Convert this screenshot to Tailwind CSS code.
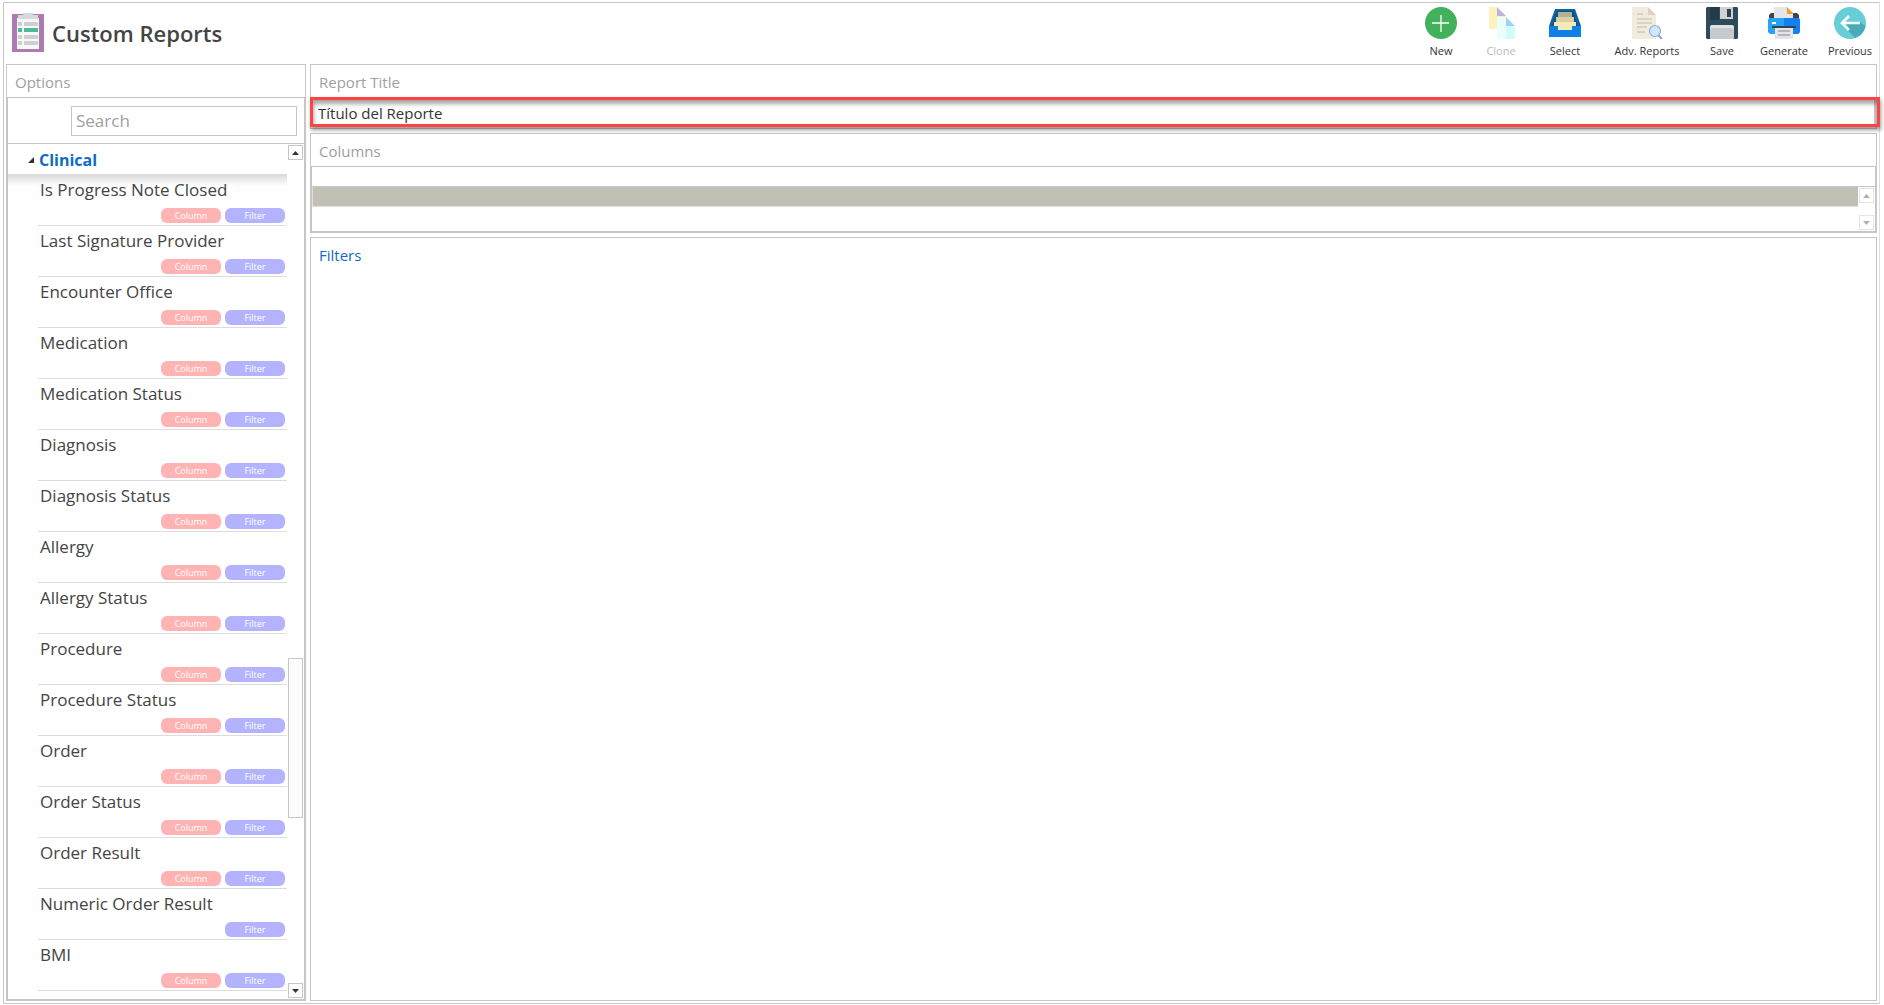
<!DOCTYPE html>
<html lang="en">
<head>
<meta charset="utf-8">
<title>Custom Reports</title>
<script src="https://cdn.jsdelivr.net/npm/@tailwindcss/browser@4"></script>
</head>
<body class="h-screen overflow-hidden bg-white pl-[3px] pr-1 pt-[2px] pb-px font-['Open_Sans','Noto_Sans',sans-serif] text-[#444]">
<div class="flex h-full flex-col border border-[#c6c6c6] border-r-[#e0e0e0] pl-[2px] pr-[2px] pb-[2px]">
  <header class="flex h-[61px] shrink-0 items-start justify-between">
    <div class="flex items-center gap-[7px] pl-[5px] pt-[10px]">
      <svg class="h-10 w-[34px]" viewBox="0 0 34 40">
        <rect x="1" y="1" width="32" height="38" fill="#ad7bb0"/>
        <rect x="6" y="5" width="22" height="31" fill="#f8f8f8"/>
        <path d="M7 2h5V0h10v2h5v4H7z" fill="#d5dadc"/>
        <path d="M7 9h4v4H7zM13 9h14v4H13zM7 22h4v4H7zM13 22h14v4H13zM7 28h4v4H7zM13 28h14v4H13z" fill="#cdd0d3"/>
        <path d="M7 15h4v4H7zM13 15h14v4H13z" fill="#4dbaa0"/>
      </svg>
      <h1 class="text-[22px] leading-[30px] font-semibold">Custom Reports</h1>
    </div>
    <nav class="flex pt-1 text-[11px] leading-4 text-[#333]" aria-label="Report actions">
      <button class="flex w-[52px] flex-col items-center gap-1">
        <svg class="size-8" viewBox="0 0 32 32"><circle cx="16" cy="16" r="16" fill="#43b05c"/><path d="M16 8v17M7 16h17" stroke="#fff" stroke-width="1.3"/></svg>
        New
      </button>
      <button class="flex w-[68px] flex-col items-center gap-1 text-[#bbb]" disabled>
        <svg class="size-8" viewBox="0 0 32 32"><path d="M4 0h8v9h9v13H4z" fill="#fff0c0"/><path d="M12 0l9 9h-9z" fill="#bdb4d8"/><path d="M12 10h9v9h9v13H12z" fill="#e9ffff"/><path d="M21 19h9v13h-9z" fill="#d2fcfb"/><path d="M21 10l9 9h-9z" fill="#a4d0f6"/></svg>
        Clone
      </button>
      <button class="flex w-[60px] flex-col items-center gap-1">
        <svg class="size-8" viewBox="0 0 32 32"><path d="M6 2h20l6 17v11H0V19z" fill="#12629c"/><path d="M8 4h16l5 16H3z" fill="#0d4f83"/><path d="M9 5h14v6H9z" fill="#b4b196"/><path d="M7 10h18v5H7z" fill="#d9cfa5"/><path d="M5 15h22v9H5z" fill="#f5e9b8"/><path d="M0 19h9v4h14v-4h9v11H0z" fill="#0f80e5"/></svg>
        Select
      </button>
      <button class="flex w-[104px] flex-col items-center gap-1">
        <svg class="size-8" viewBox="0 0 32 32"><path d="M1 0h16l8 8v24H1z" fill="#f0ebdc"/><path d="M17 0l8 8h-8z" fill="#dcd4bd"/><path d="M6 7h6M6 12h15M6 16h15M6 20h10M6 25h8" stroke="#d4ccb5" stroke-width="1.3"/><path d="M27 28l4 4" stroke="#8f9bd8" stroke-width="2"/><circle cx="24" cy="24" r="5.500" fill="#cde7fb" stroke="#98a4dc" stroke-width="1.2"/></svg>
        Adv. Reports
      </button>
      <button class="flex w-[46px] flex-col items-center gap-1">
        <svg class="size-8" viewBox="0 0 32 32"><path d="M1 0h30l1 1v30l-1 1H1l-1-1V1z" fill="#2f4a5a"/><path d="M4 0h9v13H4z" fill="#233a48"/><path d="M14 0h13v12H14z" fill="#cfd2d5"/><path d="M21 2h4v8h-4z" fill="#2b4352"/><path d="M4 20q0-2 2-2h20q2 0 2 2v12H4z" fill="#e0e2e4"/><path d="M4 24q0-3 3-3h18q3 0 3 3v8H4z" fill="#c7cacd"/></svg>
        Save
      </button>
      <button class="flex w-[78px] flex-col items-center gap-1">
        <svg class="size-8" viewBox="0 0 32 32"><path d="M1 12V8l2-2h26l2 2v4z" fill="#43434b"/><path d="M6 0h13l6 7v6H6z" fill="#e6e6ea"/><path d="M19 0l7 7h-7z" fill="#f99c28"/><path d="M1 11h30l1 2v12l-2 2H2l-2-2V13z" fill="#25a4f2"/><path d="M16 11h15l1 2v12l-2 2H16z" fill="#1380ee"/><path d="M4 15h4v2H4z" fill="#fff"/><path d="M4 19h24v2H4z" fill="#34414f"/><path d="M7 21h18v11H7z" fill="#e3e3e8"/><path d="M10 24h12M10 28h12" stroke="#85858d"/></svg>
        Generate
      </button>
      <button class="flex w-[54px] flex-col items-center gap-1">
        <svg class="size-8" viewBox="0 0 32 32"><circle cx="16" cy="16" r="16" fill="#67ced7"/><path d="M9 18l12 13a16 16 0 0 0 10.500-12L26 15z" fill="#47acb8"/><path d="M26 16H8M15 9l-7 7 7 7" fill="none" stroke="#fff" stroke-width="2.6"/></svg>
        Previous
      </button>
    </nav>
  </header>

  <main class="flex min-h-0 flex-1 gap-1">
    <aside class="flex w-[300px] shrink-0 flex-col border border-[#c6c6c6]">
      <h2 class="h-8 shrink-0 pl-2 text-[15px] leading-[34px] text-[#a0a0a0]">Options</h2>
      <div class="flex min-h-0 flex-1 flex-col border border-[#c6c6c6]">
        <div class="flex h-[46px] shrink-0 items-center justify-end border-b border-[#c6c6c6] pr-[7px]">
          <input type="search" aria-label="Search" placeholder="Search" class="h-[30px] w-[226px] border border-[#c6c6c6] px-1 text-[17px] placeholder:text-[#a0a0a0]">
        </div>
        <div class="flex min-h-0 flex-1">
          <div class="min-w-0 flex-1 overflow-hidden">
            <button class="flex h-[30px] w-full items-center gap-[5px] pl-5 pt-px text-base font-bold text-[#0f6cc4]" aria-expanded="true">
              <svg class="size-[6px]" viewBox="0 0 6 6"><path d="M6 0v6H0z" fill="#333"/></svg>
              Clinical
            </button>
            <div class="mr-px h-3 bg-linear-to-b from-[#d9d9d9] to-white"></div>
            <ul id="items" class="-mt-[11px] mr-px ml-[30px]"></ul>
          </div>
          <div class="flex w-4 shrink-0 flex-col justify-between pt-px pb-px">
            <button aria-label="Scroll up" class="grid size-[15px] place-items-center border border-[#c6c6c6]"><svg class="h-1 w-[7px]" viewBox="0 0 7 4"><path d="M0 4l3.500-4L7 4z" fill="#333"/></svg></button>
            <div class="flex flex-1 flex-col">
              <div class="grow-[499]"></div>
              <div class="w-[15px] grow-[159] border border-[#c6c6c6] bg-[#fcfcfc]"></div>
              <div class="grow-[165]"></div>
            </div>
            <button aria-label="Scroll down" class="grid size-[15px] place-items-center border border-[#c6c6c6]"><svg class="h-1 w-[7px]" viewBox="0 0 7 4"><path d="M0 0h7L3.500 4z" fill="#333"/></svg></button>
          </div>
        </div>
      </div>
    </aside>

    <div class="flex min-w-0 flex-1 flex-col gap-1">
      <section class="relative h-[65px] shrink-0 border border-[#c6c6c6]">
        <label for="title" class="block h-8 pl-2 text-[15px] leading-[34px] text-[#a0a0a0]">Report Title</label>
        <input id="title" value="Título del Reporte" class="block h-[30px] w-full border-x-2 border-t border-[#c6c6c6] px-[5px] text-[15px] text-[#333]">
        <div class="pointer-events-none absolute top-[32px] -right-1 -left-px h-[30px] border-[3px] border-[#ff4343] shadow-[1px_3px_4px_rgba(0,0,0,0.4),inset_1px_4px_4px_rgba(0,0,0,0.35)]"></div>
      </section>
      <section class="h-[100px] shrink-0 border border-[#c6c6c6]">
        <h2 class="h-8 pl-2 text-[15px] leading-[34px] text-[#a0a0a0]">Columns</h2>
        <div class="flex h-[66px] flex-col border border-[#c6c6c6]">
          <div class="h-5 shrink-0 border-b border-[#c6c6c6]"></div>
          <div class="flex min-h-0 flex-1">
            <div class="h-5 flex-1 border-b border-l border-[#e0e0e0] bg-[#c2bfb4]"></div>
            <div class="flex w-[17px] flex-col justify-between pt-px pb-px pl-px">
              <button aria-label="Scroll columns up" class="grid size-[15px] place-items-center border border-[#e3e3e3]"><svg class="h-1 w-[7px]" viewBox="0 0 7 4"><path d="M0 4l3.500-4L7 4z" fill="#b0b0b0"/></svg></button>
              <button aria-label="Scroll columns down" class="grid size-[15px] place-items-center border border-[#e3e3e3]"><svg class="h-1 w-[7px]" viewBox="0 0 7 4"><path d="M0 0h7L3.500 4z" fill="#b0b0b0"/></svg></button>
            </div>
          </div>
        </div>
      </section>
      <section class="min-h-0 flex-1 border border-[#c6c6c6]">
        <h2 class="pl-2 text-[15px] leading-[34px] text-[#0f6cc4]">Filters</h2>
      </section>
    </div>
  </main>
</div>

<template id="row">
  <li class="flex h-[51px] flex-col justify-between border-b border-[#dcdcdc] pr-[2px] pb-[2px] pl-[2px]">
    <span class="pt-[3px] text-[17px] leading-6"></span>
    <span class="flex justify-end gap-1">
      <button class="h-[15px] w-[60px] rounded-md bg-[#ffb3b3] text-[9px] leading-[15px] text-white">Column</button>
      <button class="h-[15px] w-[60px] rounded-md bg-[#b3b3ff] text-[9px] leading-[15px] text-white">Filter</button>
    </span>
  </li>
</template>
<script>
const names = ["Is Progress Note Closed","Last Signature Provider","Encounter Office","Medication","Medication Status","Diagnosis","Diagnosis Status","Allergy","Allergy Status","Procedure","Procedure Status","Order","Order Status","Order Result","Numeric Order Result","BMI","Weight"];
const filterOnly = new Set(["Numeric Order Result"]);
const list = document.getElementById("items");
for (const name of names) {
  const row = document.getElementById("row").content.cloneNode(true);
  row.querySelector("span").textContent = name;
  if (filterOnly.has(name)) row.querySelector("button").remove();
  list.append(row);
}
</script>
</body>
</html>
